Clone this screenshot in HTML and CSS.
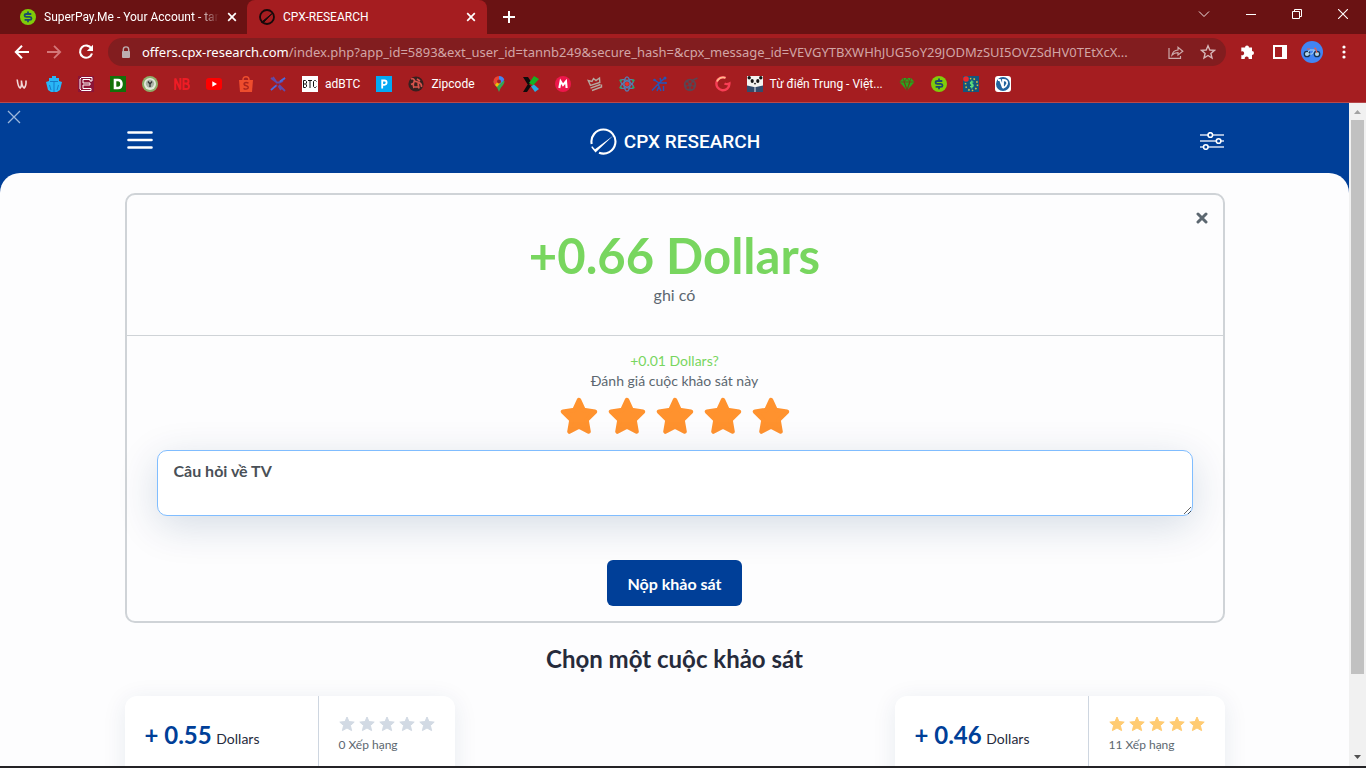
FILE: index.html
```html
<!DOCTYPE html>
<html lang="vi">
<head>
<meta charset="utf-8">
<title>CPX-RESEARCH</title>
<link rel="stylesheet" href="styles.css">
</head>
<body>
<svg class="defs" width="0" height="0" aria-hidden="true">
  <symbol id="star" viewBox="0 0 38 38"><path d="M19 3 L23.6 13 L35 14.6 L26.6 23 L28.6 34.6 L19 29.6 L9.4 34.6 L11.4 23 L3 14.6 L14.4 13 Z" fill="currentColor" stroke="currentColor" stroke-width="4.4" stroke-linejoin="round"/></symbol>
  <symbol id="small-star" viewBox="0 0 16 16"><path d="M8 1 L10 5.6 L15.2 6.1 L11.4 9.5 L12.6 14.6 L8 12 L3.4 14.6 L4.6 9.5 L.8 6.1 L6 5.6 Z" fill="currentColor" stroke="currentColor" stroke-linejoin="round"/></symbol>
  <symbol id="close" viewBox="0 0 10 10"><path d="M1.2 1.2 L8.8 8.8 M8.8 1.2 L1.2 8.8" fill="none" stroke="currentColor" stroke-width="1.7"/></symbol>
  <symbol id="dollar" viewBox="0 0 16 16"><circle cx="8" cy="8" r="8" fill="#80cc0a"/><path d="M11.3 5 H6.4 Q4.6 5 4.6 6.4 T6.4 7.9 H9.8 Q11.5 8 11.5 9.4 T9.8 10.9 H4.6 M8 2.6 V5 M8 11 V13.3" fill="none" stroke="#1c4a6e" stroke-width="1.8"/></symbol>
</svg>
<div class="window">
  <div class="tabstrip">
    <div class="tab">
      <svg class="icon16"><use href="#dollar"/></svg>
      <span class="tab-title tab-title-faded">SuperPay.Me - Your Account - tan</span>
      <button class="plain" aria-label="Close tab"><svg width="10" height="10"><use href="#close"/></svg></button>
    </div>
    <div class="tab tab-active">
      <svg class="icon16" viewBox="0 0 16 16"><circle cx="8" cy="8" r="7" fill="none" stroke="#16090a" stroke-width="1.8"/><path d="M2.5 13.3 L13 4.6 L4 14 Z" fill="#16090a" stroke="#16090a"/></svg>
      <span class="tab-title">CPX-RESEARCH</span>
      <button class="plain" aria-label="Close tab"><svg width="10" height="10"><use href="#close"/></svg></button>
    </div>
    <button class="plain new-tab" aria-label="New tab"><svg width="12" height="12" viewBox="0 0 12 12"><path d="M6 0 V12 M0 6 H12" stroke="#fff" stroke-width="2"/></svg></button>
    <div class="window-controls">
      <button class="plain" aria-label="Search tabs"><svg width="12" height="12" viewBox="0 0 12 12"><path d="M1 3.5 L6 8.5 L11 3.5" fill="none" stroke="#f0e2e2"/></svg></button>
      <button class="plain" aria-label="Minimize"><svg width="10" height="10" viewBox="0 0 10 10"><path d="M0 5.5 H10" stroke="#fff"/></svg></button>
      <button class="plain" aria-label="Restore"><svg width="10" height="10" viewBox="0 0 10 10"><path d="M.5 2.5 H7.5 V9.5 H.5 Z M2.5 2.5 V.5 H9.5 V7.5 H7.5" fill="none" stroke="#fff"/></svg></button>
      <button class="plain" aria-label="Close window"><svg width="10" height="10" viewBox="0 0 10 10"><path d="M0 0 L10 10 M10 0 L0 10" stroke="#fff" stroke-width="1.1"/></svg></button>
    </div>
  </div>

  <div class="toolbar">
    <button class="plain" aria-label="Back"><svg width="16" height="16" viewBox="0 0 16 16"><path d="M15 8 H2 M8 1.8 L1.8 8 L8 14.2" fill="none" stroke="#fff" stroke-width="2"/></svg></button>
    <button class="plain" aria-label="Forward"><svg width="16" height="16" viewBox="0 0 16 16"><path d="M1 8 H14 M8 1.8 L14.2 8 L8 14.2" fill="none" stroke="#d47779" stroke-width="1.8"/></svg></button>
    <button class="plain" aria-label="Reload"><svg width="16" height="16" viewBox="0 0 16 16"><path d="M13.4 4.5 A6.1 6.1 0 1 0 14 9.5" fill="none" stroke="#fff" stroke-width="2.1"/><path d="M15 .8 V7 H8.8 Z" fill="#fff"/></svg></button>
    <div class="address">
      <svg width="10" height="13" viewBox="0 0 10 13"><path d="M2.3 6 V3.6 A2.7 2.7 0 0 1 7.7 3.6 V6" fill="none" stroke="#bdaeb0" stroke-width="1.4"/><rect x="1" y="5" width="8" height="7" rx="1" fill="#bdaeb0"/></svg>
      <span class="url"><b>offers.cpx-research.com</b>/index.php?app_id=5893&amp;ext_user_id=tannb249&amp;secure_hash=&amp;cpx_message_id=VEVGYTBXWHhJUG5oY29JODMzSUI5OVZSdHV0TEtXcX...</span>
      <svg width="16" height="16" viewBox="0 0 16 16"><path d="M1 4 V14.4 H12.5 V12 M4 11 Q5 6.3 10 6 V3.2 L14.8 7.2 L10 11 V8.6 Q6.3 8.6 4 11 Z" fill="none" stroke="#cda9aa" stroke-width="1.2"/></svg>
      <svg width="16" height="16" viewBox="0 0 16 16"><path d="M8 1.8 L9.8 6 L14.4 6.4 L10.9 9.4 L12 14 L8 11.5 L4 14 L5.1 9.4 L1.6 6.4 L6.2 6 Z" fill="none" stroke="#d6b6b7" stroke-width="1.4"/></svg>
    </div>
    <div class="toolbar-actions">
      <button class="plain" aria-label="Extensions"><svg width="16" height="16" viewBox="0 0 16 16"><path d="M1.3 3.5 H5 A2 2 0 1 1 9 3.5 H12 V7 A2 2 0 1 1 12 11 V15 H8.6 A2 2 0 1 0 4.8 15 H1.3 V11 A2 2 0 1 0 1.3 7.4 Z" fill="#fff"/></svg></button>
      <button class="plain" aria-label="Side panel"><svg width="14" height="14" viewBox="0 0 14 14"><path d="M0 0 H14 V14 H0 Z M2 2 V12 H9 V2 Z" fill="#fff" fill-rule="evenodd"/></svg></button>
      <button class="plain" aria-label="Profile"><svg width="22" height="22" viewBox="0 0 22 22"><circle cx="11" cy="11" r="11" fill="#4285f4"/><g fill="#b4d5e8" stroke="#16324f" stroke-width="1.3"><circle cx="6" cy="13" r="2.7"/><circle cx="16" cy="13" r="2.7"/></g><path d="M6 13 L8.4 9 H13.5 L11 13 Z" fill="none" stroke="#a9d3ec"/><path d="M13 7.4 H14.5 L16 12 M6 8 H9" fill="none" stroke="#e8604c" stroke-width="1.2"/></svg></button>
      <button class="plain" aria-label="Menu"><svg width="4" height="14" viewBox="0 0 4 14"><g fill="#fff"><circle cx="2" cy="2" r="1.6"/><circle cx="2" cy="7" r="1.6"/><circle cx="2" cy="12" r="1.6"/></g></svg></button>
    </div>
  </div>

  <nav class="bookmarks" aria-label="Bookmarks">
    <a href="#"><svg class="icon16" viewBox="0 0 16 16"><path d="M3.2 3.5 Q4 11 6.2 12 Q8 10.5 7.4 4.5 Q8 11 10.2 12 Q12.4 10 12 4.5" fill="none" stroke="#f4dada" stroke-width="1.6"/></svg></a>
    <a href="#"><svg class="icon16" viewBox="0 0 16 16"><path d="M6 0 H10 V2 H13 V5 L16 6 L14 14 L11 16 H5 L2 14 L0 6 L3 5 V2 H6 Z" fill="#29b6f6"/><path d="M8 5 V16 M4 5.5 H12 M3.5 9 L5 14 M12.5 9 L11 14" stroke="#1474c4" stroke-width=".9"/></svg></a>
    <a href="#"><svg class="icon16" viewBox="0 0 16 16"><rect width="16" height="16" fill="#8b1538"/><path d="M14 1.5 H3.5 L2 3 V13 L3.5 14.5 H13 V12.5 H5 V9 H12 V7 H5 V3.5 H12 V5 H14 Z" fill="none" stroke="#fff"/></svg></a>
    <a href="#"><svg class="icon16" viewBox="0 0 16 16"><rect width="16" height="16" fill="#137009"/><path d="M5 4 H8 Q11.5 4 11.5 8 T8 12 H5 Z" fill="none" stroke="#fff" stroke-width="2.6"/></svg></a>
    <a href="#"><svg class="icon16" viewBox="0 0 16 16"><circle cx="8" cy="8" r="8" fill="#8fae6a"/><circle cx="8" cy="8" r="6" fill="#e4eadc"/><circle cx="8" cy="7.6" r="4.2" fill="#aab3a6"/><path d="M6 5.5 L8 8 L10 5.5 M8 8 V11" fill="none" stroke="#333" stroke-width="1.3"/></svg></a>
    <a href="#"><svg class="icon16" viewBox="0 0 16 16"><path d="M1.2 14 V2.5 L6.4 13.5 V2 M9.5 2 V14 M9.5 3 H12 Q14.5 3 14.5 5.3 T12 7.6 H9.5 M12 7.8 Q15 8 15 10.6 T12 13 H9.5" fill="none" stroke="#ee1c25" stroke-width="2"/></svg></a>
    <a href="#"><svg class="icon16" viewBox="0 0 16 16"><rect y="2" width="16" height="12" rx="3" fill="#f00"/><path d="M6.3 5.3 V10.7 L11 8 Z" fill="#fff"/></svg></a>
    <a href="#"><svg class="icon16" viewBox="0 0 16 16"><path d="M1 4 H15 L14 16 H2 Z" fill="#ee4d2d"/><path d="M5 4 Q5 .8 8 .8 T11 4" fill="none" stroke="#ee4d2d" stroke-width="1.5"/><path d="M10.5 7.2 Q7.8 5.8 6.2 7.3 Q5.6 9 8 9.6 Q11 10.5 10 12.3 Q8 14 5.5 12.3" fill="none" stroke="#a9231c" stroke-width="1.4"/></svg></a>
    <a href="#"><svg class="icon16" viewBox="0 0 16 16"><path d="M1 2 L7 6.5 L9 6.5 L15 2 M3 1 L7 7 M1 14 L7 9 M9 9 L15 15 M8.5 10 L11 14 M9 7 L13 5" fill="none" stroke="#624ba8" stroke-width="1.8"/><path d="M1 14 L6 9.5 M10 5.5 L15 2" stroke="#4d6edb" stroke-width="1.6"/></svg></a>
    <a href="#"><svg class="icon16" viewBox="0 0 16 16"><rect width="16" height="16" fill="#fff"/><path d="M1.5 4.5 H3.5 L4.5 5.5 V7 L3.5 8 H1.5 M3.5 8 L4.5 9 V10.5 L3.5 11.5 H1.5 V4.5 M6 4.5 H10 M8 4.5 V12 M14.5 5.5 L13.5 4.5 H12.5 L11.5 5.5 V10.5 L12.5 11.5 H13.5 L14.5 10.5" fill="none" stroke="#111"/></svg><span>adBTC</span></a>
    <a href="#"><svg class="icon16" viewBox="0 0 16 16"><rect width="16" height="16" fill="#03a9f4"/><path d="M6.2 12.5 V4.5 H8.5 Q10.6 4.5 10.6 6.6 T8.5 8.8 H6.2" fill="none" stroke="#fff" stroke-width="1.8"/></svg></a>
    <a href="#"><svg class="icon16" viewBox="0 0 16 16"><circle cx="8" cy="8" r="7.6" fill="#38201f"/><path d="M3 3 Q6 2 6.5 5 L11 6.5 Q14 8 13.5 11 M6 5.5 Q4.5 9 6 12 M10 7 L11 12.5 M3 8.5 L6 7 M9 3 L12 5 M6 11 H11" fill="none" stroke="#d8544d" stroke-width="1.7"/></svg><span>Zipcode</span></a>
    <a href="#"><svg class="icon16" viewBox="0 0 16 16"><path d="M8 16 Q7 12 4 9 Q2.4 7 2.5 5 L13.5 5 Q13.6 7 12 9 Q9 12 8 16 Z" fill="#34a853"/><path d="M2.5 5.5 A5.5 5.5 0 0 1 8 0 V5 L4 9 Q2.5 7.5 2.5 5.5" fill="#ea4335"/><path d="M8 0 A5.5 5.5 0 0 1 13.3 4 L8 9 Z" fill="#4285f4"/><path d="M4 9 L8 4 L10 6 L6 11 Z" fill="#fbbc04"/><circle cx="8" cy="5.5" r="2" fill="#9c2226"/></svg></a>
    <a href="#"><svg class="icon16" viewBox="0 0 16 16"><path d="M0 1 H5 L9 7 L5 9 Z M5 8 L8 10 L4 16 H0 Z" fill="#0c0c0c"/><path d="M11 0 L16 3 L10 9.5 L6 7 Z" fill="#18b022"/><path d="M8 10.5 L11 8.5 L16 13 L12 16 Z" fill="#29abe2"/></svg></a>
    <a href="#"><svg class="icon16" viewBox="0 0 16 16"><circle cx="8" cy="8" r="8" fill="#ed174b"/><path d="M4.3 12 L5.6 5.3 L8 9 L11 5.3 L11.6 12" fill="none" stroke="#fff" stroke-width="2.1"/></svg></a>
    <a href="#"><svg class="icon16" viewBox="0 0 16 16"><path d="M3.5 9.5 L1.2 4.5 L5 5.5 L6.5 2.5 L9 4.5 L12.5 2 L12.8 6.5 Z M3.5 12.2 L13.5 8.5 M5 14.5 L14.5 11 V8.5" fill="none" stroke="#b5a79f" stroke-width="1.4"/></svg></a>
    <a href="#"><svg class="icon16" viewBox="0 0 16 16"><g fill="none" stroke="#577db0" stroke-width="1.3"><ellipse cx="8" cy="8" rx="3" ry="7.2"/><ellipse cx="8" cy="8" rx="3" ry="7.2" transform="rotate(60 8 8)"/><ellipse cx="8" cy="8" rx="3" ry="7.2" transform="rotate(120 8 8)"/></g><circle cx="8" cy="8" r="2" fill="#e9332b"/><g fill="#27a862"><circle cx="1.7" cy="4.5" r="1.3"/><circle cx="14.3" cy="4.5" r="1.3"/><circle cx="1.7" cy="11.5" r="1.3"/><circle cx="14.3" cy="11.5" r="1.3"/></g></svg></a>
    <a href="#"><svg class="icon16" viewBox="0 0 16 16"><path d="M1 14.5 L8 7 L14 2 M8 7 L3.5 4 M8 7 H15 M8 7 L7 10 M6 15 L8 10.5 L10 15 M12.5 10 V15 M9 2 L10 5" fill="none" stroke="#2355b8" stroke-width="1.5"/><g fill="#2355b8"><circle cx="14" cy="2" r="1.5"/><circle cx="3.5" cy="4" r="1.3"/><circle cx="15" cy="7" r="1"/></g></svg></a>
    <a href="#"><svg class="icon16" viewBox="0 0 16 16"><circle cx="7" cy="9" r="6.2" fill="#5b4551"/><g fill="#a21d20"><circle cx="7" cy="5.6" r="1.4"/><circle cx="4" cy="8" r="1.4"/><circle cx="10" cy="8" r="1.4"/><circle cx="5" cy="11.6" r="1.4"/><circle cx="9" cy="11.6" r="1.4"/></g><path d="M10 4 L14.5 2" stroke="#5b4551" stroke-width="1.5"/></svg></a>
    <a href="#"><svg class="icon16" viewBox="0 0 16 16"><path d="M10.5 1.8 A6.5 6.5 0 1 0 14.4 7.5 Q12 8.8 9.5 7.5" fill="none" stroke="#f83e55" stroke-width="2.4"/><path d="M10.5 1.8 A6.5 6.5 0 0 0 2 5.5" fill="none" stroke="#ffb98c" stroke-width="1.8"/></svg></a>
    <a href="#"><svg class="icon16" viewBox="0 0 16 16"><rect width="16" height="16" fill="#f5f3ef"/><path d="M0 9.5 L7 11 H9 L16 9.5 V16 H0 Z" fill="#344b6b"/><path d="M8 11 V16" stroke="#dfe3ea"/><g fill="#151515"><circle cx="2.2" cy="1.8" r="1.7"/><circle cx="13.8" cy="1.8" r="1.7"/><ellipse cx="5.2" cy="5" rx="1.6" ry="1.9"/><ellipse cx="10.8" cy="5" rx="1.6" ry="1.9"/><circle cx="8" cy="7.6" r=".9"/></g></svg><span>Từ điển Trung - Việt...</span></a>
    <a href="#"><svg class="icon16" viewBox="0 0 16 16"><path d="M4 2 H12 L15.5 6 L8 14.5 L.5 6 Z" fill="#2aa51e"/><path d="M.5 6 H15.5 M4 2 L8 14 L12 2 M8 2 L5 6 L8 14 L11 6 Z" fill="none" stroke="#7a3a18" stroke-width=".8"/></svg></a>
    <a href="#"><svg class="icon16"><use href="#dollar"/></svg></a>
    <a href="#"><svg class="icon16" viewBox="0 0 16 16"><rect width="16" height="16" fill="#14567e"/><circle cx="8.5" cy="8.5" r="6" fill="none" stroke="#d2c33d" stroke-width="1.6" stroke-dasharray="1.5 2.2"/><path d="M10.5 6 H8 Q6.8 7 8 8.2 H9.4 Q11 9.4 9.4 10.7 H7 M8.8 4.5 V12.4" fill="none" stroke="#5ddf7c" stroke-width="1.2"/><circle cx="3" cy="3" r="2.8" fill="#f0282d"/></svg></a>
    <a href="#"><svg class="icon16" viewBox="0 0 16 16"><rect width="16" height="16" rx="3" fill="#fff"/><circle cx="8" cy="8" r="7" fill="#21639d"/><path d="M3 4 H5 L8 12 V4 Q13 4 12 8 Q11 11 8 12" fill="none" stroke="#fff" stroke-width="1.8"/></svg></a>
  </nav>

  <div class="viewport">
    <div class="page">
      <header class="header">
        <button class="plain dismiss" aria-label="Đóng"><svg width="14" height="14" viewBox="0 0 14 14"><path d="M1 1 L13 13 M13 1 L1 13" stroke="#9db8dc" stroke-width="1.3"/></svg></button>
        <div class="container header-row">
          <button class="plain menu" aria-label="Menu"><svg width="26" height="20" viewBox="0 0 26 20"><path d="M1.5 1.5 H24.5 M1.5 9 H24.5 M1.5 16.5 H24.5" stroke="#fff" stroke-width="2.6" stroke-linecap="round"/></svg></button>
          <a class="logo" href="#"><svg width="27" height="27" viewBox="0 0 27 27"><path d="M1.7 16 A12 12 0 1 1 9 24.7" fill="none" stroke="#fff" stroke-width="2.1"/><path d="M2 18 L5 21.2 L23.4 7.5 L5.5 24.6 L1.4 19.6 Z" fill="#fff"/></svg><span>CPX RESEARCH</span></a>
          <button class="plain filters" aria-label="Bộ lọc"><svg width="24" height="18" viewBox="0 0 24 18"><g fill="#003f98" stroke="#fff"><path d="M0 3 H24 M0 9 H24 M0 15 H24" stroke-width="1.6" stroke="#d3def0"/><g stroke-width="1.6"><circle cx="10.3" cy="3" r="2.3"/><circle cx="18.6" cy="9" r="2.3"/><circle cx="5.8" cy="15" r="2.3"/></g></g></svg></button>
        </div>
      </header>
      <main class="main">
        <div class="container">
          <section class="review">
            <div class="review-head">
              <button class="plain review-close" aria-label="Đóng"><svg width="12" height="12" viewBox="0 0 12 12"><path d="M2 2 L10 10 M10 2 L2 10" stroke="#5c6770" stroke-width="3" stroke-linecap="round"/></svg></button>
              <h1>+0.66 Dollars</h1>
              <p>ghi có</p>
            </div>
            <form class="review-form">
              <p class="bonus">+0.01 Dollars?</p>
              <label for="comment">Đánh giá cuộc khảo sát này</label>
              <div class="stars">
                <svg><use href="#star"/></svg><svg><use href="#star"/></svg><svg><use href="#star"/></svg><svg><use href="#star"/></svg><svg><use href="#star"/></svg>
              </div>
              <textarea id="comment">Câu hỏi về TV</textarea>
              <button class="submit" type="button">Nộp khảo sát</button>
            </form>
          </section>
          <h2>Chọn một cuộc khảo sát</h2>
          <div class="surveys">
            <article class="survey">
              <div class="reward"><strong>+ 0.55</strong> Dollars</div>
              <div class="rating">
                <div class="small-stars"><svg><use href="#small-star"/></svg><svg><use href="#small-star"/></svg><svg><use href="#small-star"/></svg><svg><use href="#small-star"/></svg><svg><use href="#small-star"/></svg></div>
                <span>0 Xếp hạng</span>
              </div>
            </article>
            <article class="survey">
              <div class="reward"><strong>+ 0.46</strong> Dollars</div>
              <div class="rating">
                <div class="small-stars rated"><svg><use href="#small-star"/></svg><svg><use href="#small-star"/></svg><svg><use href="#small-star"/></svg><svg><use href="#small-star"/></svg><svg><use href="#small-star"/></svg></div>
                <span>11 Xếp hạng</span>
              </div>
            </article>
          </div>
        </div>
      </main>
    </div>
    <div class="scrollbar" aria-hidden="true">
      <svg width="7" height="4" viewBox="0 0 7 4"><path d="M0 4 L3.5 0 L7 4 Z" fill="#a3a3a3"/></svg>
      <div class="track"><div class="thumb"></div></div>
      <svg width="7" height="4" viewBox="0 0 7 4"><path d="M0 0 L3.5 4 L7 0 Z" fill="#505050"/></svg>
    </div>
  </div>
  <div class="taskbar"></div>
</div>
</body>
</html>
```
FILE: styles.css
```css
* { box-sizing: border-box; }
body { margin: 0; }
h1, h2, p { margin: 0; }
svg { display: block; flex: none; }
.defs { position: absolute; }
.plain { padding: 0; border: 0; background: none; color: inherit; display: flex; flex: none; }
.icon16 { width: 16px; height: 16px; }

.window { display: flex; flex-direction: column; height: 100vh; overflow: hidden; background: #a51d20; color: #fff; font: 12px Roboto, "Noto Sans", sans-serif; }

.tabstrip { display: flex; height: 34px; background: #6a1213; }
.tab { display: flex; align-items: center; gap: 8px; width: 247px; padding: 0 10px 0 20px; }
.tab + .tab { width: 240px; padding: 0 11px 0 12px; }
.tab-active { background: #a51d20; border-radius: 8px 8px 0 0; }
.tab-title { flex: 1; min-width: 0; white-space: nowrap; font-size: 12px; }
.tab-title-faded { -webkit-mask-image: linear-gradient(90deg, #000 88%, transparent); mask-image: linear-gradient(90deg, #000 88%, transparent); }
.new-tab { align-items: center; margin-left: 16px; }
.window-controls { display: flex; align-items: center; gap: 36px; height: 28px; margin-left: auto; padding-right: 18px; }

.toolbar { display: flex; align-items: center; gap: 16px; height: 36px; padding: 0 6px 0 14px; }
.toolbar > .plain { width: 16px; }
.address { display: flex; align-items: center; gap: 16px; flex: 1; min-width: 0; height: 28px; margin: 0 -10px 0 -2px; padding: 0 10px 0 13px; border-radius: 14px; background: #821d1f; }
.url { flex: 1; min-width: 0; margin-left: -5px; overflow: hidden; white-space: nowrap; font-family: "Noto Sans", sans-serif; font-size: 13px; color: #d2a5a6; }
.url b { font-weight: 400; color: #fff; }
.toolbar-actions { display: flex; align-items: center; }
.toolbar-actions .plain { width: 32px; justify-content: center; }

.bookmarks { display: flex; align-items: center; gap: 16px; height: 33px; padding: 0 14px 4px; border-bottom: 1px solid #b6494c; overflow: hidden; }
.bookmarks a { display: flex; align-items: center; gap: 7px; color: #fff; text-decoration: none; white-space: nowrap; }

.viewport { display: flex; flex: 1; min-height: 0; }
.page { flex: 1; position: relative; overflow: hidden; background: #003f98; color: #5c6770; font-family: Lato, "Liberation Serif", sans-serif; }
.container { width: 100%; max-width: 1100px; margin: 0 auto; }
.dismiss { position: absolute; left: 7px; top: 7px; }
.header-row { display: grid; grid-template-columns: 1fr auto 1fr; align-items: center; height: 70px; padding: 6px 1px 0 2px; }
.filters { justify-self: end; }
.logo { display: flex; align-items: center; gap: 7px; color: #fff; text-decoration: none; font: 500 19px Roboto, sans-serif; }

.main { padding: 20px 20px 80px; border-radius: 20px 20px 0 0; background: #fdfdfe; }
.review { border: 2px solid #cfd3d7; border-radius: 10px; }
.review-head { position: relative; padding: 30px 20px; border-bottom: 1px solid #cfd3d7; text-align: center; }
.review-head h1 { font-size: 49px; line-height: 60px; color: #78d65f; }
.review-head p { font-size: 16px; line-height: 20px; }
.review-close { position: absolute; right: 15px; top: 17px; }
.review-form { display: flex; flex-direction: column; align-items: center; padding: 15px 30px; font-size: 14px; line-height: 20px; }
.bonus { color: #78d65f; }
.stars { display: flex; gap: 10px; margin: 6px 0 15px; color: #ff922e; }
.stars svg { width: 38px; height: 38px; }
.review-form textarea { width: 100%; height: 66px; padding: 10px 16px; border: 1px solid #80bdff; border-radius: 10px; outline: 0; background: #fff; color: #495057; box-shadow: 0 10px 40px #00336629; font: 700 16px/20px Lato, "Liberation Serif", sans-serif; resize: vertical; }
.submit { height: 46px; margin-top: 44px; padding: 0 20px; border: 0; border-radius: 6px; background: #003f98; color: #fff; font: 700 16px Lato, "Liberation Serif", sans-serif; }
.page h2 { margin: 20px 0 21px; font-size: 24px; line-height: 32px; color: #262b3b; text-align: center; }
.surveys { display: flex; justify-content: space-between; }
.survey { display: flex; width: 330px; height: 90px; border-radius: 12px; background: #fff; box-shadow: 0 4px 24px #00336617; }
.reward { flex: 1; padding: 23px 20px; font-size: 14px; line-height: 32px; color: #262b3b; }
.reward strong { margin-right: 1px; font-size: 24px; color: #003f98; }
.rating { width: 137px; padding: 20px; border-left: 1px solid #ced6e0; font-size: 12px; }
.small-stars { display: flex; gap: 4px; margin-bottom: 5px; color: #d2dae4; }
.small-stars svg { width: 16px; height: 16px; }
.rated { color: #ffcb72; }

.scrollbar { display: flex; flex-direction: column; align-items: center; width: 17px; padding: 7px 0; background: #f1f1f1; }
.track { flex: 1; width: 13px; padding: 6px 0; }
.thumb { height: 88%; background: #c1c1c1; }
.taskbar { height: 2px; background: #242326; }
```
